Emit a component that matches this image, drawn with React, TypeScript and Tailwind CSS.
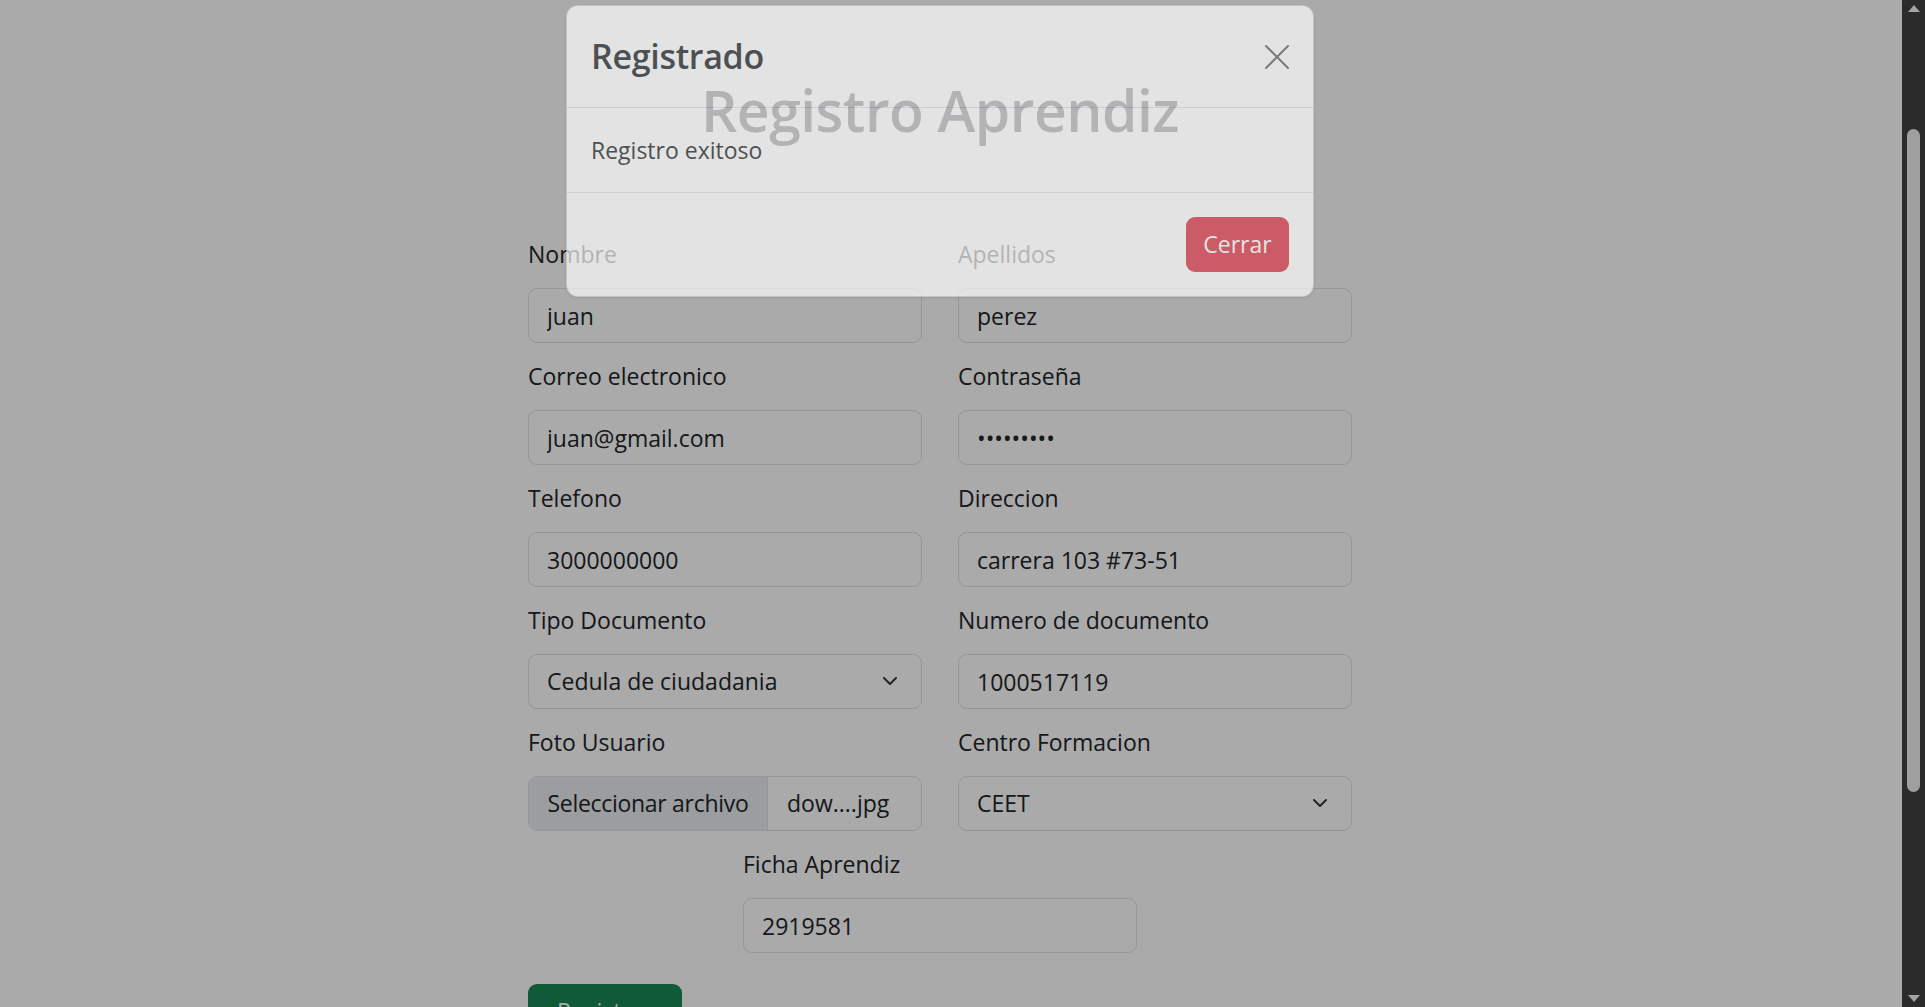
import { ChangeEvent } from "react";

const fields = [
  { label: "Nombre", value: "juan" },
  { label: "Apellidos", value: "perez" },
  { label: "Correo electronico", value: "juan@gmail.com" },
  { label: "Contraseña", value: "•••••••••" },
  { label: "Telefono", value: "3000000000" },
  { label: "Direccion", value: "carrera 103 #73-51" },
];

const boxClass =
  "h-[55px] w-full rounded-[9px] border border-[#dee2e6] bg-white text-[23px] text-[#212529] outline-none";

function Chevron() {
  return (
    <svg width="14" height="9" viewBox="0 0 14 9" fill="none">
      <path d="M1 1l6 6 6-6" stroke="#343a40" strokeWidth="2" strokeLinecap="round" strokeLinejoin="round" />
    </svg>
  );
}

function Label({ children }: { children: string }) {
  return <label className="mb-4 block text-[23px] leading-9 text-[#212529]">{children}</label>;
}

function TextField({ label, value }: { label: string; value: string }) {
  const noop = (_e: ChangeEvent<HTMLInputElement>) => {};
  return (
    <div>
      <Label>{label}</Label>
      <input className={`${boxClass} px-[18px]`} value={value} onChange={noop} readOnly />
    </div>
  );
}

function SelectField({ label, value }: { label: string; value: string }) {
  return (
    <div>
      <Label>{label}</Label>
      <div className={`${boxClass} flex items-center justify-between pl-[18px] pr-[24px]`}>
        <span>{value}</span>
        <Chevron />
      </div>
    </div>
  );
}

function FileField() {
  return (
    <div>
      <Label>Foto Usuario</Label>
      <div className={`${boxClass} flex overflow-hidden`}>
        <div className="flex w-[239px] shrink-0 items-center justify-center whitespace-nowrap border-r border-[#dee2e6] bg-[#e9ecef] tracking-[-0.3px]">
          Seleccionar archivo
        </div>
        <div className="flex items-center whitespace-nowrap px-[19px]">dow....jpg</div>
      </div>
    </div>
  );
}

function Scrollbar() {
  return (
    <div className="flex h-full w-[23px] shrink-0 flex-col items-center bg-[#2b2b2b]">
      <div className="flex h-[17px] items-center justify-center">
        <svg width="12" height="7" viewBox="0 0 12 7">
          <polygon points="6,0 12,7 0,7" fill="#a3a3a3" />
        </svg>
      </div>
      <div className="mt-[112px] h-[663px] w-[13px] rounded-full bg-[#9f9f9f]" />
      <div className="flex-1" />
      <div className="flex h-[17px] items-center justify-center">
        <svg width="12" height="7" viewBox="0 0 12 7">
          <polygon points="0,0 12,0 6,7" fill="#a3a3a3" />
        </svg>
      </div>
    </div>
  );
}

export default function App() {
  return (
    <div className="flex h-screen w-full overflow-hidden font-['Open_Sans',sans-serif]">
      <div className="relative h-full flex-1 overflow-hidden bg-white">
        <div className="pr-[22px] pt-[74px]">
          <div className="mx-auto w-[824px]">
            <h1 className="text-center text-[57px] font-semibold leading-[72px] tracking-[-0.5px] text-[#212529]">
              Registro Aprendiz
            </h1>

            <div className="mt-[90px] grid grid-cols-2 gap-x-[36px] gap-y-[15px]">
              {fields.map((f) => (
                <TextField key={f.label} label={f.label} value={f.value} />
              ))}
              <SelectField label="Tipo Documento" value="Cedula de ciudadania" />
              <TextField label="Numero de documento" value="1000517119" />
              <FileField />
              <SelectField label="Centro Formacion" value="CEET" />
              <div className="col-span-2 mx-auto w-[394px]">
                <TextField label="Ficha Aprendiz" value="2919581" />
              </div>
            </div>

            <button className="mt-[31px] h-[55px] w-[154px] rounded-[9px] bg-[#198754] text-[23px] text-white">
              Registrar
            </button>
          </div>
        </div>

        {/* backdrop */}
        <div className="absolute inset-0 bg-black/[0.333]" />

        {/* modal, mid fade-in */}
        <div className="absolute inset-x-0 top-[5px] flex justify-center pr-[22px]">
          <div className="w-[748px] rounded-xl border border-black/[0.175] bg-white opacity-[0.67] shadow-sm">
            <div className="flex h-[102px] items-center justify-between border-b border-[#dee2e6] px-6">
              <h5 className="text-[34px] font-semibold leading-[1.2] tracking-[-0.3px] text-[#212529]">Registrado</h5>
              <svg width="24" height="24" viewBox="0 0 24 24" className="opacity-60">
                <path d="M1 1l22 22M23 1L1 23" stroke="#000" strokeWidth="2" strokeLinecap="round" />
              </svg>
            </div>
            <div className="p-6 text-[23px] leading-9 text-[#212529]">Registro exitoso</div>
            <div className="flex justify-end border-t border-[#dee2e6] px-6 pb-6 pt-6">
              <button className="h-[55px] w-[103px] rounded-[9px] bg-[#dc3545] text-[23px] text-white">
                Cerrar
              </button>
            </div>
          </div>
        </div>
      </div>
      <Scrollbar />
    </div>
  );
}
